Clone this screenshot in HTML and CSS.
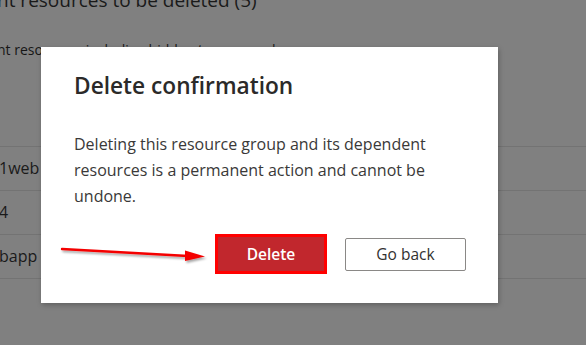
FILE: index.html
```html
<!DOCTYPE html>
<html lang="en">
<head>
    <meta charset="UTF-8">
    <meta name="viewport" content="width=device-width, initial-scale=1.0">
    <title>Delete confirmation</title>
    <link rel="stylesheet" href="styles.css">
</head>
<body>

    <!-- Pagina de fondo (detras del overlay) -->
    <div class="page">
        <h1 class="page-title">nt resources to be deleted (5)</h1>
        <p class="page-note">nt resources, including hidden types, are shown</p>

        <div class="rows">
            <div class="row">1web</div>
            <div class="row">4</div>
            <div class="row">bapp</div>
        </div>
    </div>

    <!-- Dialogo -->
    <div class="dialog">
        <h2 class="dialog-title">Delete confirmation</h2>
        <p class="dialog-text">Deleting this resource group and its dependent resources is a permanent action and cannot be undone.</p>
        <div class="dialog-actions">
            <button class="btn btn-danger">Delete</button>
            <button class="btn btn-default">Go back</button>
        </div>
    </div>

    <!-- Flecha roja de anotacion -->
    <svg class="arrow" width="160" height="20" viewBox="0 0 160 20">
        <defs>
            <filter id="sombra" x="-10%" y="-50%" width="120%" height="200%">
                <feDropShadow dx="1.5" dy="2" stdDeviation="1" flood-color="#000" flood-opacity="0.35"/>
            </filter>
        </defs>
        <g filter="url(#sombra)">
            <line x1="2" y1="3" x2="128" y2="10" stroke="#f40000" stroke-width="2.4" stroke-linecap="round"/>
            <polygon points="125,4.5 145,10.5 125,15" fill="#f40000"/>
        </g>
    </svg>

</body>
</html>
```

FILE: styles.css
```css
/* Fondo con overlay gris */
body {
    margin: 0;
    padding: 0;
    width: 586px;
    height: 345px;
    overflow: hidden;
    background-color: #808080;
    font-family: 'Open Sans', 'Noto Sans', sans-serif;
    color: #161616;
}

.page {
    margin-left: -3px;
}

.page-title {
    margin: -13px 0 0 0;
    font-size: 19px;
    font-weight: 400;
    line-height: 26px;
    color: #1a1a1a;
}

.page-note {
    margin: 27px 0 0 0;
    font-size: 14px;
    line-height: 20px;
}

.rows {
    margin-top: 86px;
    border-top: 1px solid #737373;
}

.row {
    height: 43px;
    line-height: 43px;
    font-size: 16px;
    padding-left: 2px;
    border-bottom: 1px solid #737373;
    color: #1a1a1a;
}

/* Caja del dialogo */
.dialog {
    position: absolute;
    left: 41px;
    top: 47px;
    width: 457px;
    height: 256px;
    box-sizing: border-box;
    padding: 24px 32px 0 33px;
    background-color: #ffffff;
    box-shadow: 1px 2px 5px rgba(0, 0, 0, 0.25);
    color: #323130;
}

.dialog-title {
    margin: 0;
    font-size: 22.7px;
    font-weight: 600;
    line-height: 30px;
    color: #2b2a29;
}

.dialog-text {
    margin: 30px 0 0 0;
    font-size: 16px;
    line-height: 26px;
    color: #3a3938;
}

.dialog-actions {
    display: flex;
    justify-content: flex-end;
    align-items: center;
    gap: 21px;
    margin-top: 28px;
}

.btn {
    height: 34px;
    font-family: inherit;
    font-size: 15.5px;
    border-radius: 2px;
    cursor: pointer;
}

.btn-danger {
    width: 106px;
    background-color: #c1272d;
    color: #ffffff;
    font-weight: 600;
    border: none;
    outline: 3px solid #ff0000;
    border-radius: 0;
}

.btn-default {
    width: 121px;
    height: 33px;
    background-color: #ffffff;
    color: #323130;
    border: 1px solid #8a8886;
}

/* Flecha de anotacion */
.arrow {
    position: absolute;
    left: 60px;
    top: 246px;
}
```
